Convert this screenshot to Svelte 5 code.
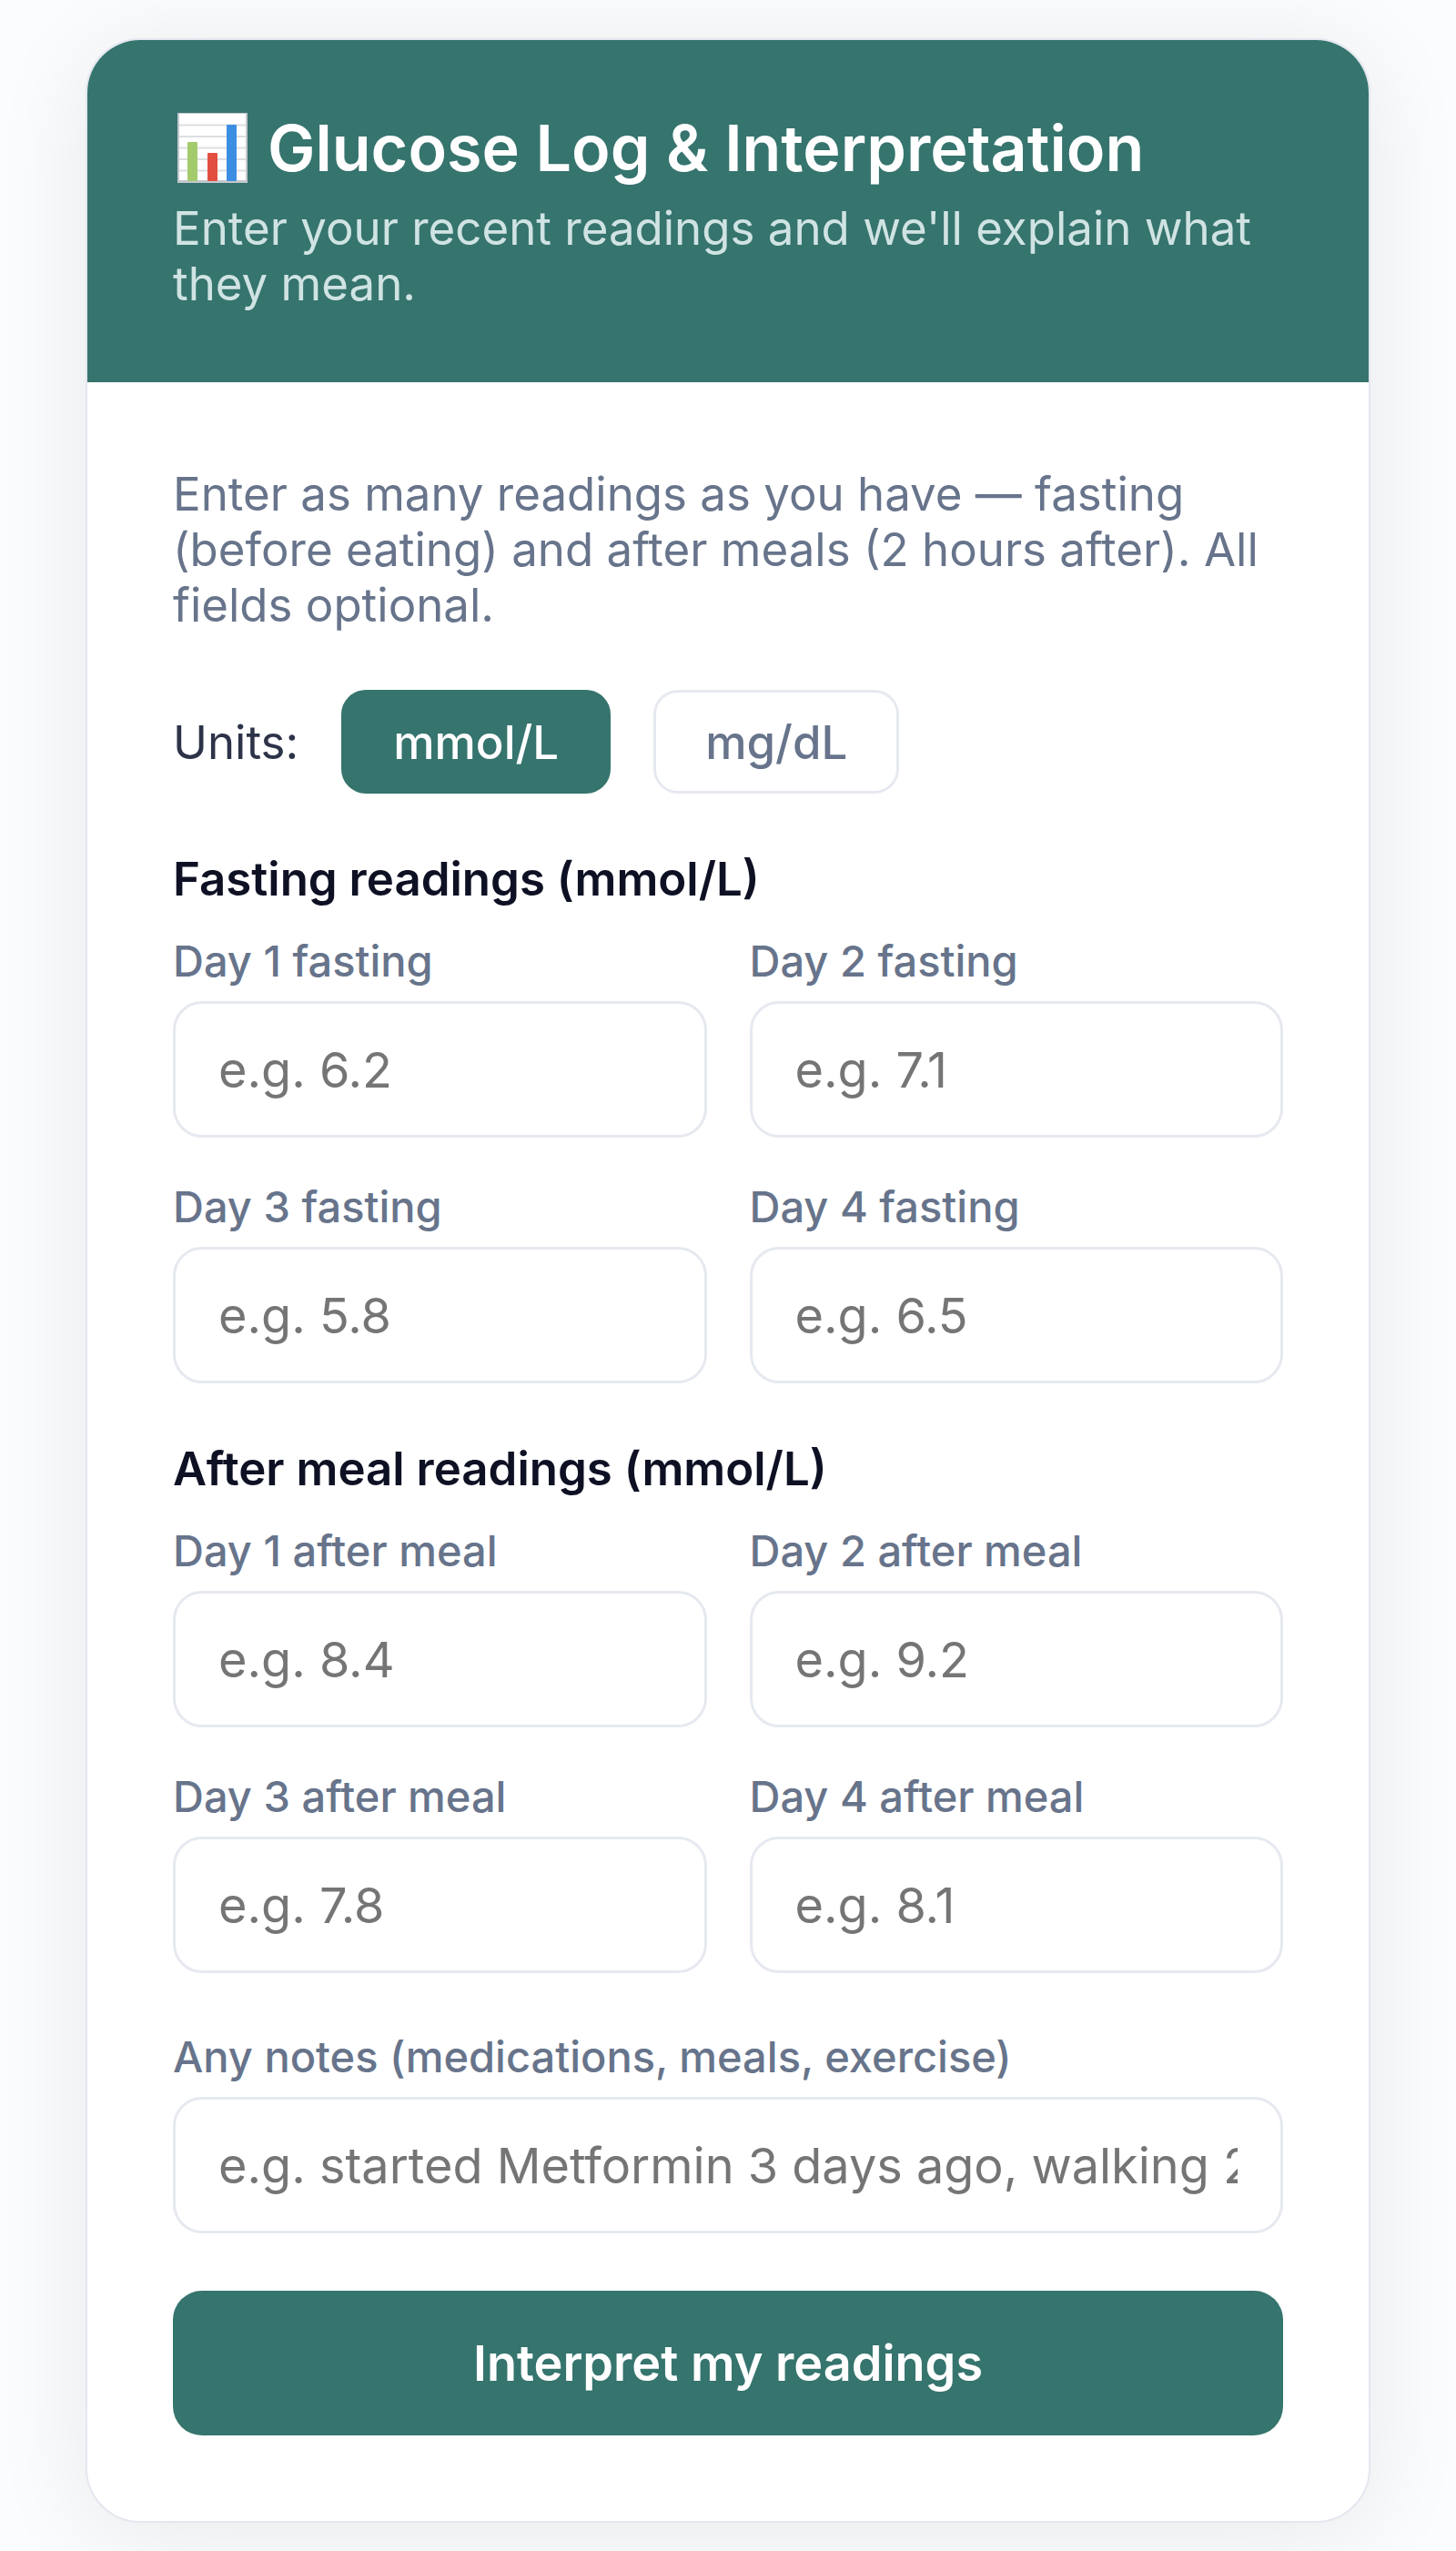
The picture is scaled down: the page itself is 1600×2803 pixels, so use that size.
<script lang="ts">
  const sections = [
    { title: 'Fasting readings', kind: 'fasting', hints: ['6.2', '7.1', '5.8', '6.5'] },
    { title: 'After meal readings', kind: 'after meal', hints: ['8.4', '9.2', '7.8', '8.1'] },
  ];
  const units = ['mmol/L', 'mg/dL'];

  let unit = $state('mmol/L');
</script>

<main class="page">
  <section class="card">
    <header class="card-header">
      <h1>
        <svg class="chart-icon" viewBox="0 0 77 77" aria-hidden="true">
          <rect width="77" height="77" fill="#c3c8ce" />
          <rect x="2" y="1" width="73" height="73" fill="#ffffff" />
          <path d="M2 13.5h73M2 26h73M2 38.5h73M2 51h73M2 63.5h73" stroke="#dcdee1" stroke-width="2" />
          <rect x="11" y="32" width="11" height="43" rx="1" fill="#a3cb6c" />
          <rect x="33" y="44" width="11" height="31" rx="1" fill="#e24f40" />
          <rect x="54" y="13" width="11" height="62" rx="1" fill="#3c8ee3" />
        </svg>
        Glucose Log &amp; Interpretation
      </h1>
      <p>Enter your recent readings and we'll explain what they mean.</p>
    </header>

    <form class="card-body" onsubmit={(e) => e.preventDefault()}>
      <p class="intro">
        Enter as many readings as you have — fasting (before eating) and after meals (2 hours after). All fields
        optional.
      </p>

      <div class="units">
        <span>Units:</span>
        {#each units as u}
          <button type="button" class="unit-btn" class:active={unit === u} onclick={() => (unit = u)}>{u}</button>
        {/each}
      </div>

      {#each sections as section}
        <div class="section">
          <h2>{section.title} ({unit})</h2>
          <div class="grid">
            {#each section.hints as hint, i}
              <label class="field">
                <span>Day {i + 1} {section.kind}</span>
                <input type="text" inputmode="decimal" placeholder="e.g. {hint}" />
              </label>
            {/each}
          </div>
        </div>
      {/each}

      <label class="field">
        <span>Any notes (medications, meals, exercise)</span>
        <input type="text" placeholder="e.g. started Metformin 3 days ago, walking 20 min daily" />
      </label>

      <button type="submit" class="submit-btn">Interpret my readings</button>
    </form>
  </section>
</main>

<style>
  :global(body) {
    margin: 0;
    background: #fafcfd;
  }

  .page {
    padding: 42px 94px 32px;
    overflow: hidden;
    font-family: Inter, sans-serif;
    font-size: 51px;
    line-height: 61px;
  }

  .card {
    overflow: hidden;
    border: 2px solid #e4e7f0;
    border-radius: 60px;
    background: #ffffff;
    box-shadow: 0 12px 108px rgba(0, 0, 0, 0.08);
  }

  h1,
  h2,
  p {
    margin: 0;
  }

  .card-header {
    padding: 76px 94px 78px;
    background: #36746e;
    color: #ffffff;
  }

  h1 {
    display: flex;
    align-items: center;
    gap: 22px;
    margin-bottom: 15px;
    font-size: 70px;
    font-weight: 600;
    line-height: 85px;
  }

  .chart-icon {
    flex: none;
    width: 77px;
    height: 77px;
    margin-left: 5px;
  }

  .card-header p {
    color: #d0e3e3;
  }

  .card-body {
    display: flex;
    flex-direction: column;
    gap: 63px;
    padding: 92px 94px 94px;
  }

  .intro {
    color: #67748b;
  }

  .units {
    display: flex;
    align-items: center;
    gap: 47px;
    color: #2d3348;
  }

  .unit-btn {
    height: 114px;
    padding: 0 54px;
    border: 3px solid #e6e9f0;
    border-radius: 27px;
    background: #ffffff;
    color: #67748b;
    font: inherit;
    font-weight: 500;
    cursor: pointer;
  }

  .unit-btn.active {
    border-color: #36746e;
    background: #36746e;
    color: #ffffff;
  }

  h2 {
    margin-bottom: 31px;
    color: #0e1024;
    font-size: 51px;
    font-weight: 600;
  }

  .grid {
    display: grid;
    grid-template-columns: 1fr 1fr;
    gap: 47px;
  }

  .field {
    display: flex;
    flex-direction: column;
    gap: 16px;
    min-width: 0;
    color: #67748b;
    font-size: 47px;
    font-weight: 500;
    line-height: 57px;
  }

  input {
    box-sizing: border-box;
    width: 100%;
    height: 150px;
    padding: 0 47px;
    border: 3px solid #e6e9f0;
    border-radius: 32px;
    background: #ffffff;
    color: #0e1024;
    font-family: inherit;
    font-size: 54px;
  }

  input::placeholder {
    color: #757575;
  }

  .submit-btn {
    height: 159px;
    border: none;
    border-radius: 32px;
    background: #36746e;
    color: #ffffff;
    font-family: inherit;
    font-size: 54px;
    font-weight: 600;
    cursor: pointer;
  }
</style>
